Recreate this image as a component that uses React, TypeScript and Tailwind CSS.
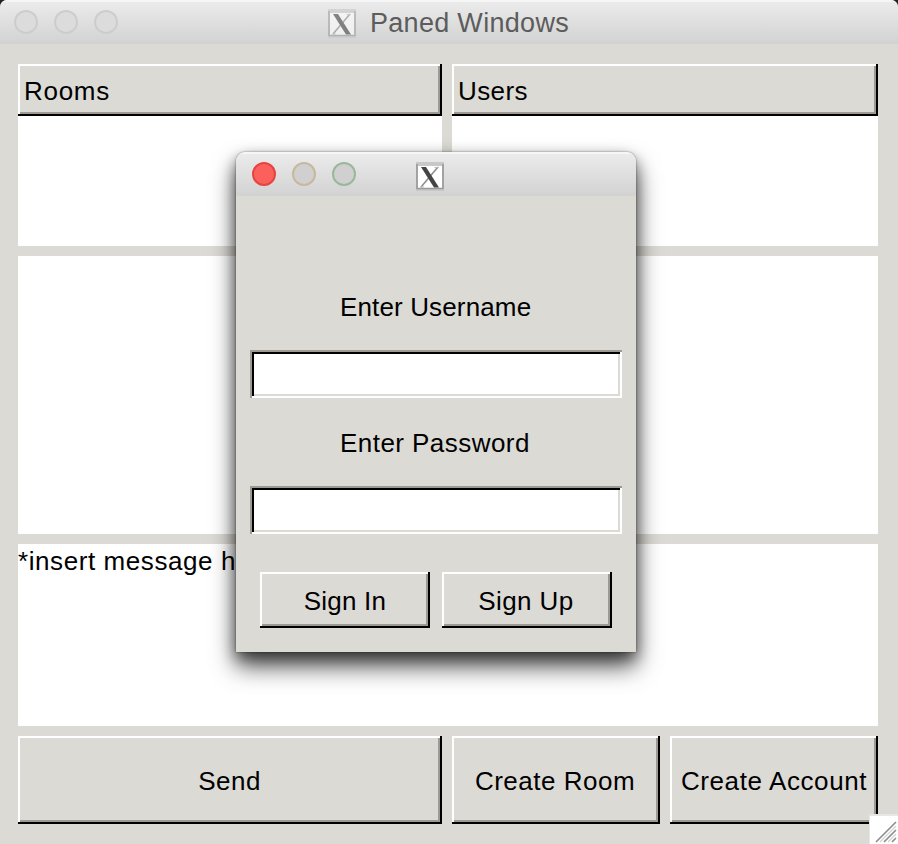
import React from "react";

const raised =
  "bg-[#dcdad5] shadow-[inset_-2px_-2px_0_#000,inset_2px_2px_0_#fff,inset_-4px_-4px_0_#9e9a91]";
const sunken =
  "bg-white shadow-[inset_2px_2px_0_#9e9a91,inset_-2px_-2px_0_#fff,inset_4px_4px_0_#000,inset_-4px_-4px_0_#dcdad5]";
const titleBar =
  "bg-[linear-gradient(to_bottom,#f6f6f6_0,#f6f6f6_2px,#ebebeb_2px,#d2d2d2_100%)]";

function XIcon({ className = "" }: { className?: string }) {
  return (
    <svg className={className} width="28" height="30" viewBox="0 0 28 30">
      <rect x="0" y="1" width="28" height="29" fill="#c8c8c8" />
      <rect x="2" y="5" width="24" height="22" fill="#fff" />
      <path d="M1 3V27.500H27V3" fill="none" stroke="#999" strokeWidth="1.6" />
      <path d="M22 6L5 26" stroke="#8f8f8f" strokeWidth="1.6" />
      <path d="M5 6H10L23 26.500H18Z" fill="#444" />
      <path d="M18.500 6.500H23M4 26H8" stroke="#bbb" strokeWidth="1" />
    </svg>
  );
}

function Dot({ className }: { className: string }) {
  return <span className={`size-6 rounded-full border-2 ${className}`} />;
}

function Button({ className, children }: { className: string; children: React.ReactNode }) {
  return (
    <button className={`flex items-center justify-center whitespace-nowrap ${raised} ${className}`}>
      {children}
    </button>
  );
}

function LoginDialog() {
  return (
    <div className="absolute left-[236px] top-[152px] flex h-[500px] w-[400px] flex-col rounded-t-[9px] bg-[#dcdad5] shadow-[0_0_2px_rgba(0,0,0,0.5),0_14px_24px_rgba(0,0,0,0.7),0_6px_14px_rgba(0,0,0,0.4)]">
      <div className={`flex h-11 shrink-0 rounded-t-[9px] pl-4 ${titleBar}`}>
        <div className="flex gap-4 pt-[10px]">
          <Dot className="border-[#e2463f] bg-[#fc605c]" />
          <Dot className="border-[#c8b89c] bg-[#d0d0d0]" />
          <Dot className="border-[#97b99a] bg-[#d0d0d0]" />
        </div>
        <XIcon className="ml-[60px] mt-[9px]" />
      </div>
      <div className="flex flex-col px-[14px] pt-[97px]">
        <label className="pl-[90px] leading-[28px] tracking-[0.14px]">Enter Username</label>
        <input className={`mt-[29px] h-12 w-[372px] px-2 outline-none ${sunken}`} />
        <label className="mt-[31px] pl-[90px] leading-[28px] tracking-[0.45px]">Enter Password</label>
        <input className={`mt-[29px] h-12 w-[372px] px-2 outline-none ${sunken}`} />
        <div className="mt-[38px] flex gap-3 pl-[10px]">
          <Button className="h-14 w-[170px] pt-[3px] tracking-[0.2px]">Sign In</Button>
          <Button className="h-14 w-[170px] pr-[2px] pt-[3px] tracking-[0.4px]">Sign Up</Button>
        </div>
      </div>
    </div>
  );
}

export default function App() {
  return (
    <div className="h-[844px] w-[898px] overflow-hidden bg-[#2a2024] font-['Liberation_Sans',Arial,sans-serif] text-[26px] text-black">
      <div className="relative flex h-full flex-col rounded-t-[7px] bg-[#dcdad5]">
        <header className={`flex h-11 shrink-0 rounded-t-[7px] pl-[14px] ${titleBar}`}>
          <div className="flex gap-4 pt-[10px]">
            <Dot className="border-[#cdcdcd] bg-[#dcdcdc]" />
            <Dot className="border-[#cdcdcd] bg-[#dcdcdc]" />
            <Dot className="border-[#cdcdcd] bg-[#dcdcdc]" />
          </div>
          <XIcon className="ml-[210px] mt-[8px] opacity-60" />
          <h1 className="ml-[14px] mt-[7px] text-[27px] leading-[32px] tracking-[0.3px] text-[#5c5c5c]">
            Paned Windows
          </h1>
        </header>

        <main className="flex flex-col gap-[10px] px-[18px] pt-5">
          <section className="grid h-[182px] w-[860px] grid-cols-[424px_426px] gap-[10px]">
            <div className="bg-white">
              <div className={`h-[52px] pl-[6px] leading-[54px] tracking-[0.7px] ${raised}`}>Rooms</div>
            </div>
            <div className="bg-white">
              <div className={`h-[52px] pl-[6px] leading-[54px] tracking-[0.4px] ${raised}`}>Users</div>
            </div>
          </section>
          <section className="h-[278px] w-[860px] bg-white" />
          <section className="h-[182px] w-[860px] whitespace-nowrap bg-white pt-[2px] leading-[30px] tracking-[0.58px]">
            *insert message here*
          </section>
          <footer className="flex h-[88px] gap-[10px]">
            <Button className="w-[424px] pr-px pt-[3px] tracking-[0.5px]">Send</Button>
            <Button className="w-[208px] pr-[2px] pt-[3px] tracking-[0.5px]">Create Room</Button>
            <Button className="w-[208px] pt-[3px] tracking-[0.6px]">Create Account</Button>
          </footer>
        </main>

        <LoginDialog />

        <svg className="absolute bottom-0 right-0" width="29" height="30" viewBox="0 0 29 30">
          <rect width="29" height="30" fill="#e6e6e4" />
          <rect x="1" y="2" width="28" height="28" fill="#fff" />
          <path d="M7 28L27 8M15 28L27 16M23 28L27 24" stroke="#8c8c8c" strokeWidth="1.6" />
          <path d="M11 28L27 12M19 28L27 20" stroke="#d4d4d4" strokeWidth="1.4" />
        </svg>
      </div>
    </div>
  );
}
